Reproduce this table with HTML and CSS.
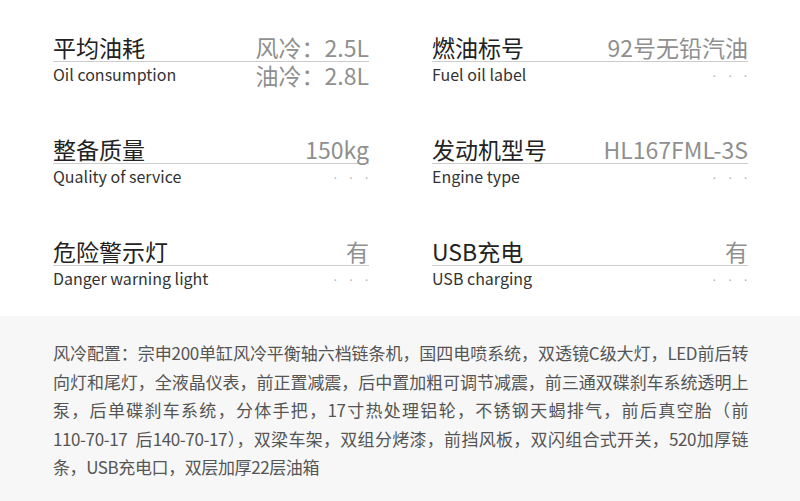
FILE: index.html
```html
<!DOCTYPE html>
<html lang="zh-CN">
<head>
<meta charset="utf-8">
<title>参数</title>
<link rel="stylesheet" href="styles.css">
</head>
<body>
<section class="specs">
  <div class="item">
    <div class="head"><span class="name">平均油耗</span><span class="val">风冷：2.5L</span></div>
    <div class="sub"><span class="en">Oil consumption</span><span class="val">油冷：2.8L</span></div>
  </div>
  <div class="item">
    <div class="head"><span class="name">燃油标号</span><span class="val">92号无铅汽油</span></div>
    <div class="sub"><span class="en">Fuel oil label</span><span class="dots">···</span></div>
  </div>
  <div class="item">
    <div class="head"><span class="name">整备质量</span><span class="val">150kg</span></div>
    <div class="sub"><span class="en">Quality of service</span><span class="dots">···</span></div>
  </div>
  <div class="item">
    <div class="head"><span class="name">发动机型号</span><span class="val">HL167FML-3S</span></div>
    <div class="sub"><span class="en">Engine type</span><span class="dots">···</span></div>
  </div>
  <div class="item">
    <div class="head"><span class="name">危险警示灯</span><span class="val">有</span></div>
    <div class="sub"><span class="en">Danger warning light</span><span class="dots">···</span></div>
  </div>
  <div class="item">
    <div class="head"><span class="name">USB充电</span><span class="val">有</span></div>
    <div class="sub"><span class="en">USB charging</span><span class="dots">···</span></div>
  </div>
</section>
<section class="config">
  <p>风冷配置：宗申200单缸风冷平衡轴六档链条机，国四电喷系统，双透镜C级大灯，LED前后转向灯和尾灯，全液晶仪表，前正置减震，后中置加粗可调节减震，前三通双碟刹车系统透明上泵，后单碟刹车系统，分体手把，17寸热处理铝轮，不锈钢天蝎排气，前后真空胎（前<span class="nw">110-70-17 &nbsp;后140-70-17</span>），双梁车架，双组分烤漆，前挡风板，双闪组合式开关，520加厚链条，USB充电口，双层加厚22层油箱</p>
</section>
</body>
</html>
```
FILE: styles.css
```css
html, body {
  margin: 0;
  padding: 0;
  background: #ffffff;
  font-family: "Noto Sans CJK SC", "Noto Sans", sans-serif;
  text-autospace: no-autospace;
}

.specs {
  display: grid;
  grid-template-columns: 1fr 1fr;
  column-gap: 63px;
  row-gap: 49px;
  padding: 33px 52px 26px 53px;
}

.item {
  display: flex;
  flex-direction: column;
}

.head {
  display: flex;
  justify-content: space-between;
  align-items: center;
  height: 28px;
  border-bottom: 1px solid #cccccc;
}

.name {
  font-size: 23px;
  line-height: 28px;
  color: #222222;
}

.val {
  font-size: 23px;
  line-height: 24px;
  color: #8f8f8f;
}

.sub {
  display: flex;
  justify-content: space-between;
  align-items: center;
  height: 24px;
}

.sub .val {
  line-height: 22px;
  padding-top: 1px;
}

.en {
  font-size: 16px;
  line-height: 24px;
  color: #333333;
}

.dots {
  font-family: "Liberation Sans", sans-serif;
  font-size: 14px;
  line-height: 24px;
  letter-spacing: 11px;
  margin-right: -11px;
  padding-top: 2px;
  color: #b4b4b4;
}

.config {
  background: #f7f7f7;
  padding: 23px 52px 20px 53px;
}

.config p {
  margin: 0;
  font-size: 17px;
  line-height: 28.5px;
  letter-spacing: -0.4px;
  color: #555555;
  text-align: justify;
}

.nw {
  white-space: nowrap;
}
```
